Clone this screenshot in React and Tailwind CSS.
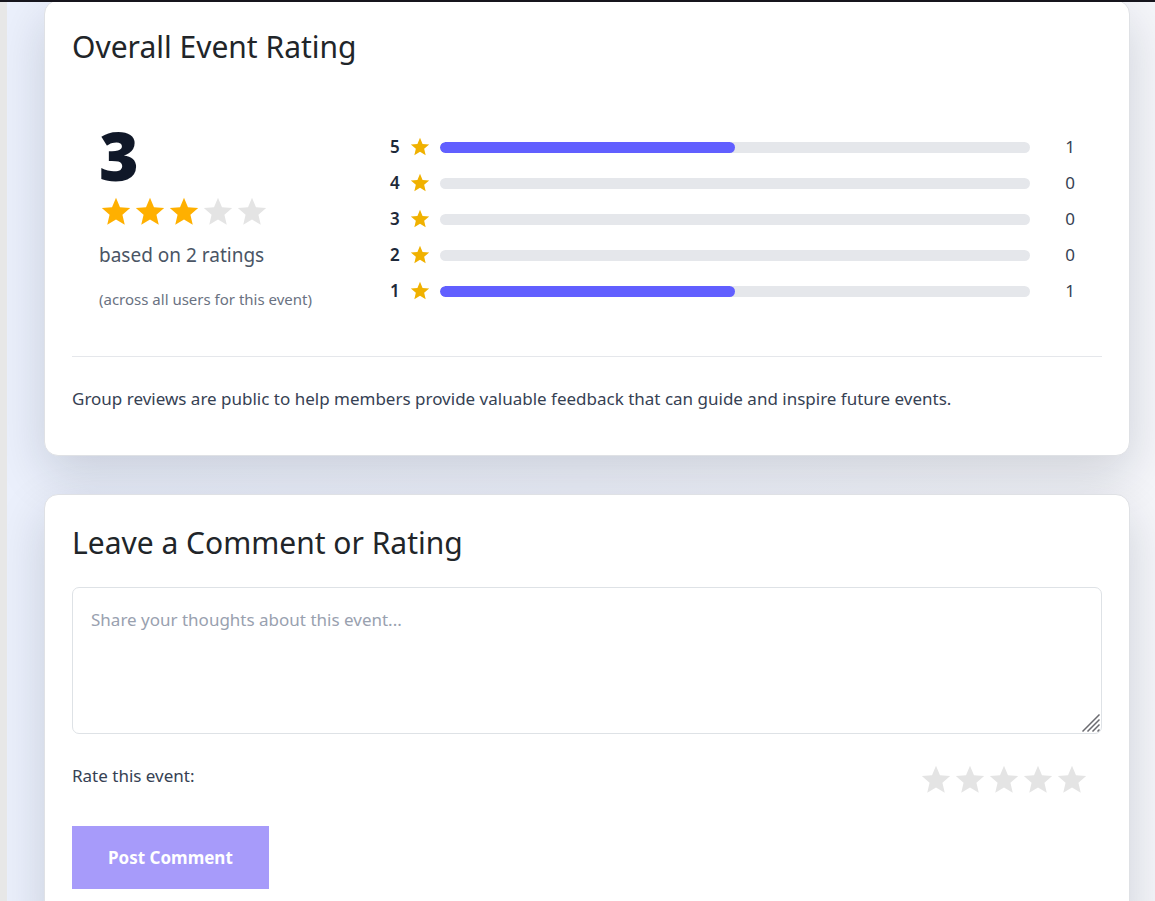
import React, { useState } from "react";

const STAR =
  "M12 17.27L18.18 21l-1.64-7.03L22 9.24l-7.19-.61L12 2 9.19 8.63 2 9.24l5.46 4.73L5.82 21z";

function Star({ className }) {
  return (
    <svg viewBox="0 0 24 24" fill="currentColor" aria-hidden="true" className={className}>
      <path d={STAR} />
    </svg>
  );
}

const breakdown = [
  { stars: 5, count: 1 },
  { stars: 4, count: 0 },
  { stars: 3, count: 0 },
  { stars: 2, count: 0 },
  { stars: 1, count: 1 },
];
const total = 2;

const card =
  "rounded-[14px] border border-[#dfe1e5] bg-white px-[27px] shadow-[0_18px_50px_rgba(15,23,42,0.16)]";

function OverallRating() {
  return (
    <section className={card + " -mt-0.5 pt-[25px] pb-[42px]"}>
      <h2 className="text-[30px] leading-[42px] text-[#212529]">Overall Event Rating</h2>
      <div className="flex items-start px-[27px] pt-[55px] pb-[45px]">
        <div className="w-[291px] shrink-0">
          <p className="text-[68px] leading-[64px] font-black text-[#101828]">3</p>
          <div className="flex pt-2" role="img" aria-label="3 out of 5 stars">
            {[1, 2, 3, 4, 5].map((n) => (
              <Star
                key={n}
                className={n <= 3 ? "size-[34px] text-[#ffb000]" : "size-[34px] text-[#e4e4e4]"}
              />
            ))}
          </div>
          <p className="mt-3 text-[19px] leading-7 text-[#4a5565]">based on 2 ratings</p>
          <p className="mt-[18px] text-[15px] leading-6 text-[#6a7282]">(across all users for this event)</p>
        </div>
        <ul className="flex-1 pt-1.5">
          {breakdown.map((row) => (
            <li key={row.stars} className="flex h-9 items-center">
              <span className="text-[17px] leading-6 font-semibold text-[#1e2939]">
                {row.stars}
              </span>
              <Star className="mx-[9px] size-[22px] shrink-0 text-[#f0b100]" />
              <div className="h-[11px] flex-1 overflow-hidden rounded-full bg-[#e5e7eb]">
                <div
                  className="h-full rounded-full bg-[#615fff]"
                  style={{ width: `${(row.count / total) * 100}%` }}
                />
              </div>
              <span className="w-[45px] text-right text-[17px] leading-6 text-[#364153]">
                {row.count}
              </span>
            </li>
          ))}
        </ul>
      </div>
      <p className="border-t border-[#e5e7eb] pt-7 text-[17px] leading-7 text-[#364153]">
        Group reviews are public to help members provide valuable feedback that can guide and
        inspire future events.
      </p>
    </section>
  );
}

function CommentForm() {
  const [rating, setRating] = useState(0);
  return (
    <section className={card + " pt-[27px] pb-11"}>
      <h2 className="text-[30px] leading-[42px] text-[#212529]">
        <label htmlFor="comment">Leave a Comment or Rating</label>
      </h2>
      <form onSubmit={(e) => e.preventDefault()}>
        <div className="relative mt-[23px]">
          <textarea
            id="comment"
            placeholder="Share your thoughts about this event..."
            className="block h-[147px] w-full resize-none rounded-[7px] border border-[#dee2e6] bg-white px-[18px] py-[18px] text-[17px] leading-7 text-[#364153] outline-none placeholder:text-[#99a1af]"
          />
          <svg
            viewBox="0 0 18 18"
            aria-hidden="true"
            className="pointer-events-none absolute right-0.5 bottom-0.5 size-[18px]"
            fill="none"
            stroke="#6b6b70"
            strokeWidth="1.5"
          >
            <path d="M0.5 17.5L17.5 0.5M5.5 17.5L17.5 5.5M10.5 17.5L17.5 10.5M15.5 17.5L17.5 15.5" />
          </svg>
        </div>
        <div className="flex items-start justify-between pt-7 pr-[13px]">
          <span className="text-[17px] leading-7 text-[#364153]">Rate this event:</span>
          <div className="flex pt-px">
            {[1, 2, 3, 4, 5].map((n) => (
              <button
                key={n}
                type="button"
                aria-label={`Rate ${n} out of 5`}
                onClick={() => setRating(n)}
              >
                <Star
                  className={
                    n <= rating ? "size-[34px] text-[#ffb000]" : "size-[34px] text-[#e4e4e4]"
                  }
                />
              </button>
            ))}
          </div>
        </div>
        <button
          type="submit"
          className="mt-[29px] h-[63px] bg-[#a79bfa] px-9 text-[17px] leading-7 font-bold text-white"
        >
          Post Comment
        </button>
      </form>
    </section>
  );
}

export default function App() {
  return (
    <div className="flex h-screen flex-col overflow-hidden border-t-2 border-[#16151d] bg-[#e7e7e7] pl-[7px] font-['Noto_Sans','Open_Sans',sans-serif]">
      <main className="flex flex-1 flex-col gap-[38px] overflow-hidden bg-linear-to-r from-[#ebf0fc] via-[#eff2fb] to-[#f5f6fa] pr-[25px] pl-[37px]">
        <OverallRating />
        <CommentForm />
      </main>
    </div>
  );
}
